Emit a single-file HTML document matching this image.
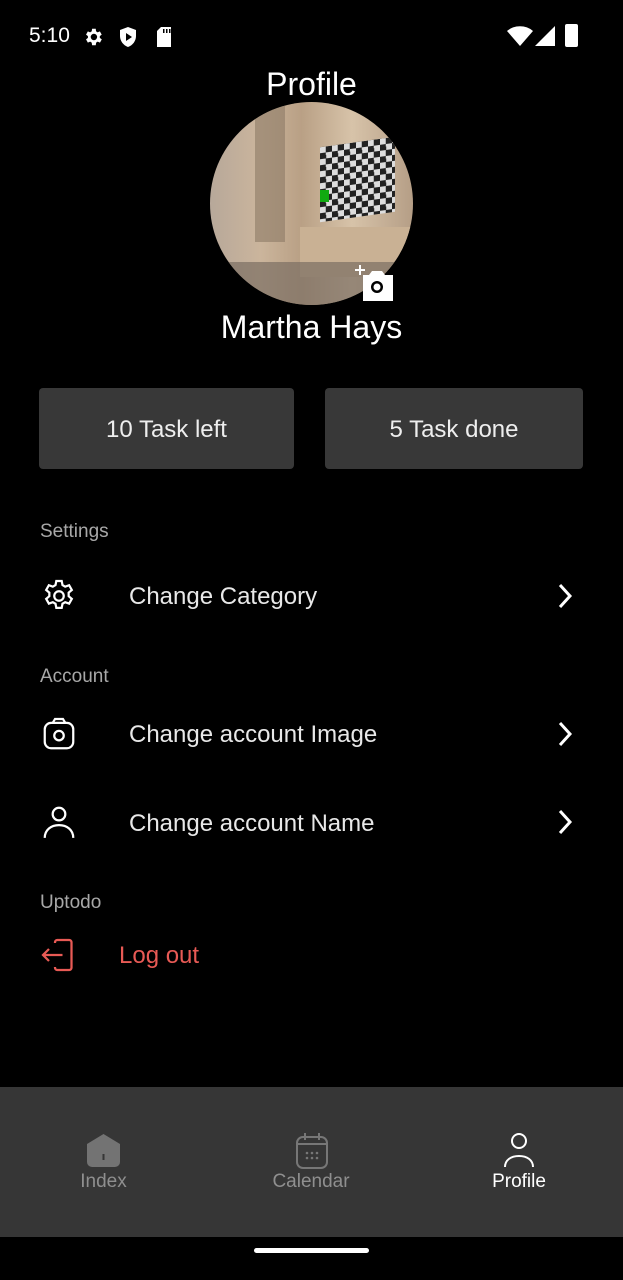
<!DOCTYPE html>
<html><head><meta charset="utf-8"><style>
*{margin:0;padding:0;box-sizing:border-box}
body{width:623px;height:1280px;background:#000;color:#fff;font-family:"Liberation Sans",sans-serif;position:relative;overflow:hidden}
.a{position:absolute}
.t{white-space:nowrap}
.btn{position:absolute;top:388px;height:81px;background:#383838;border-radius:4px;font-size:24px;display:flex;align-items:center;justify-content:center;color:#eee;padding-top:3px}
.sec{position:absolute;left:40px;font-size:19px;color:#a8a8a8}
.row{position:absolute;left:129px;font-size:24px;color:#e8e8e8}
</style></head><body>
<div class="a t" style="left:29px;top:24px;font-size:21px">5:10</div>
<svg class="a" style="left:82px;top:26px" width="22" height="22" viewBox="0 0 24 24"><path fill="#fff" d="M19.4 13a7.5 7.5 0 000-2l2.1-1.6-2-3.5-2.5 1a7 7 0 00-1.7-1L15 3h-4l-.4 2.9a7 7 0 00-1.7 1l-2.5-1-2 3.5L6.5 11a7.5 7.5 0 000 2l-2.1 1.6 2 3.5 2.5-1a7 7 0 001.7 1L11 21h4l.4-2.9a7 7 0 001.7-1l2.5 1 2-3.5zM13 15.5a3.5 3.5 0 110-7 3.5 3.5 0 010 7z"/></svg>
<svg class="a" style="left:118px;top:26px" width="20" height="22" viewBox="0 0 20 22"><path fill="#fff" d="M10 1L2 4v6c0 5 3.5 9.5 8 11 4.5-1.5 8-6 8-11V4z"/><path fill="#000" d="M8 7l6 4-6 4z"/></svg>
<svg class="a" style="left:155px;top:26px" width="18" height="22" viewBox="0 0 18 22"><path fill="#fff" d="M6 1h10v20H2V5z"/><path fill="#000" d="M8 3h1.5v4H8zM11 3h1.5v4H11zM14 3h1.5v4H14z"/></svg>
<svg class="a" style="left:507px;top:26px" width="26" height="20" viewBox="0 0 26 20"><path fill="#fff" d="M0 5a20 20 0 0126 0L13 20z"/></svg>
<svg class="a" style="left:535px;top:26px" width="20" height="20"><path fill="#fff" d="M20 0v20H0z"/></svg>
<div class="a" style="left:565px;top:24px;width:13px;height:23px;background:#fff;border-radius:2px"></div>
<div class="a t" style="left:0;width:623px;text-align:center;top:66px;font-size:32px">Profile</div>
<div class="a" style="left:210px;top:102px;width:203px;height:203px;border-radius:50%;overflow:hidden;background:linear-gradient(90deg,#b7a89a 0%,#cbb59c 25%,#b9a085 45%,#d7c3a9 70%,#b59e86 100%)">
<div class="a" style="left:45px;top:0;width:30px;height:140px;background:#8c7a66;opacity:.6"></div>
<div class="a" style="left:110px;top:40px;width:75px;height:75px;background:repeating-conic-gradient(#222 0 25%,#ddd 0 50%) 0 0/12px 12px;transform:skewY(-8deg)"></div>
<div class="a" style="left:110px;top:88px;width:9px;height:12px;background:#1a1"></div>
<div class="a" style="left:90px;top:125px;width:120px;height:50px;background:#c9b194"></div>
<div class="a" style="left:0;top:160px;width:203px;height:43px;background:#7b6e63;opacity:.7"></div>
</div>
<svg class="a" style="left:355px;top:265px" width="40" height="36" viewBox="0 0 40 36"><path fill="#fff" d="M4 0h2v4h4v2H6v4H4V6H0V4h4z"/><path fill="#fff" d="M8 10h6l3-4h10l3 4h8v26H8z"/><circle cx="22" cy="22" r="6" fill="#000"/><circle cx="22" cy="22" r="3.5" fill="#fff"/></svg>
<div class="a t" style="left:0;width:623px;text-align:center;top:309px;font-size:32px">Martha Hays</div>
<div class="btn" style="left:39px;width:255px">10 Task left</div>
<div class="btn" style="left:325px;width:258px">5 Task done</div>
<div class="sec t" style="top:521px">Settings</div>
<svg class="a" style="left:40px;top:577px" width="38" height="38" viewBox="0 0 24 24" fill="none" stroke="#fff" stroke-width="1.4"><path d="M10.3 2.5h3.4l.5 2.6 1.7 1 2.5-.9 1.7 3-2 1.7v2.2l2 1.7-1.7 3-2.5-.9-1.7 1-.5 2.6h-3.4l-.5-2.6-1.7-1-2.5.9-1.7-3 2-1.7v-2.2l-2-1.7 1.7-3 2.5.9 1.7-1z"/><circle cx="12" cy="12" r="3"/></svg>
<div class="row t" style="top:583px">Change Category</div>
<svg class="a" style="left:555px;top:582px" width="20" height="28" viewBox="0 0 20 28"><path d="M5 3l10 11L5 25" fill="none" stroke="#fff" stroke-width="3"/></svg>
<div class="sec t" style="top:666px">Account</div>
<svg class="a" style="left:40px;top:715px" width="38" height="38" viewBox="0 0 24 24" fill="none" stroke="#fff" stroke-width="1.4"><rect x="3" y="5" width="18" height="16" rx="4"/><path d="M8 5l1.5-2.5h5L16 5"/><circle cx="12" cy="13" r="3"/></svg>
<div class="row t" style="top:721px">Change account Image</div>
<svg class="a" style="left:555px;top:720px" width="20" height="28" viewBox="0 0 20 28"><path d="M5 3l10 11L5 25" fill="none" stroke="#fff" stroke-width="3"/></svg>
<svg class="a" style="left:40px;top:803px" width="38" height="38" viewBox="0 0 24 24" fill="none" stroke="#fff" stroke-width="1.4"><circle cx="12" cy="7" r="4"/><path d="M3 22c0-5 4-8 9-8s9 3 9 8"/></svg>
<div class="row t" style="top:810px">Change account Name</div>
<svg class="a" style="left:555px;top:808px" width="20" height="28" viewBox="0 0 20 28"><path d="M5 3l10 11L5 25" fill="none" stroke="#fff" stroke-width="3"/></svg>
<div class="sec t" style="top:892px">Uptodo</div>
<svg class="a" style="left:40px;top:937px" width="36" height="36" viewBox="0 0 24 24" fill="none" stroke="#e85a55" stroke-width="1.5"><path d="M10 4V3.5A1.5 1.5 0 0111.5 2h8A1.5 1.5 0 0121 3.5v17a1.5 1.5 0 01-1.5 1.5h-8A1.5 1.5 0 0110 20.5V20"/><path d="M15 12H2M6 8l-4 4 4 4"/></svg>
<div class="a t" style="left:119px;top:942px;font-size:24px;color:#e85a55">Log out</div>
<div class="a" style="left:0;top:1087px;width:623px;height:150px;background:#363636"></div>
<svg class="a" style="left:87px;top:1134px" width="33" height="33" viewBox="0 0 33 33"><path fill="#737373" d="M16.5 0L33 10v18a5 5 0 01-5 5H5a5 5 0 01-5-5V10z"/><rect x="15.5" y="20" width="2" height="6" fill="#363636"/></svg>
<div class="a t" style="left:0;width:207px;text-align:center;top:1171px;font-size:19px;color:#8f8f8f">Index</div>
<svg class="a" style="left:295px;top:1132px" width="34" height="38" viewBox="0 0 34 38" fill="none" stroke="#777" stroke-width="2"><rect x="2" y="5" width="30" height="31" rx="6"/><path d="M2 12h30M10 1v7M24 1v7"/><g fill="#777" stroke="none"><circle cx="12" cy="21" r="1.3"/><circle cx="17" cy="21" r="1.3"/><circle cx="22" cy="21" r="1.3"/><circle cx="12" cy="26" r="1.3"/><circle cx="17" cy="26" r="1.3"/><circle cx="22" cy="26" r="1.3"/></g></svg>
<div class="a t" style="left:207px;width:208px;text-align:center;top:1171px;font-size:19px;color:#8f8f8f">Calendar</div>
<svg class="a" style="left:502px;top:1132px" width="34" height="36" viewBox="0 0 34 36" fill="none" stroke="#fff" stroke-width="2"><circle cx="17" cy="9" r="7"/><path d="M3 35c0-7 6-11 14-11s14 4 14 11"/></svg>
<div class="a t" style="left:415px;width:208px;text-align:center;top:1171px;font-size:19px;color:#fff">Profile</div>
<div class="a" style="left:254px;top:1248px;width:115px;height:5px;border-radius:3px;background:#fff"></div>
</body></html>
